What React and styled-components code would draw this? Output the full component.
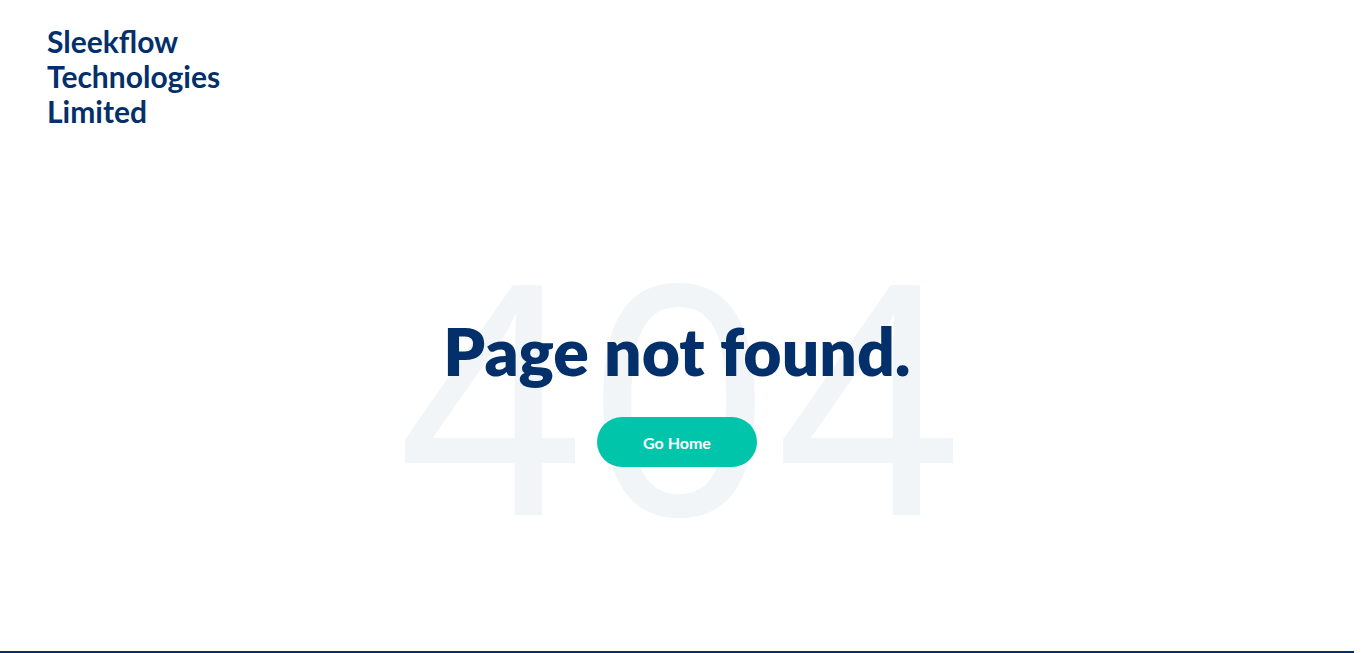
import React from 'react';
import styled, { createGlobalStyle } from 'styled-components';

const GlobalStyle = createGlobalStyle`
    html, body {
        margin: 0;
        padding: 0;
        background: #ffffff;
    }
    body {
        font-family: 'Lato', 'Noto Sans', sans-serif;
        color: #03306b;
    }
`;

const Page = styled.div`
    height: 100vh;
    box-sizing: border-box;
    margin-right: 12px;
    display: flex;
    flex-direction: column;
    border-bottom: 2px solid #03306b;
    overflow: hidden;
`;

const Header = styled.header`
    padding: 24px 47px 0;
`;

const Logo = styled.div`
    width: 220px;
    font-size: 30px;
    font-weight: 700;
    line-height: 35px;
    color: #03306b;
`;

const Stage = styled.main`
    flex: 1;
    display: grid;
    place-items: center;
    padding-bottom: 34px;
`;

const BigCode = styled.div`
    grid-area: 1 / 1;
    font-family: 'Noto Sans', 'Lato', sans-serif;
    font-size: 320px;
    font-weight: 400;
    line-height: 1;
    color: #f1f5f8;
    letter-spacing: 6px;
    user-select: none;
    margin-top: 36px;
    margin-left: 10px;
`;

const Content = styled.div`
    grid-area: 1 / 1;
    display: flex;
    flex-direction: column;
    align-items: center;
    gap: 30px;
    z-index: 1;
    margin-top: 36px;
`;

const Title = styled.h1`
    margin: 0;
    font-size: 66px;
    font-weight: 800;
    line-height: 1.1;
    color: #03306b;
`;

const HomeButton = styled.a`
    display: flex;
    align-items: center;
    justify-content: center;
    width: 160px;
    height: 50px;
    border-radius: 25px;
    background: #00c5ab;
    color: #ffffff;
    font-size: 16px;
    font-weight: 700;
    text-decoration: none;
`;

export default function App() {
    return (
        <>
            <GlobalStyle />
            <Page>
                <Header>
                    <Logo>Sleekflow Technologies Limited</Logo>
                </Header>
                <Stage>
                    <BigCode>404</BigCode>
                    <Content>
                        <Title>Page not found.</Title>
                        <HomeButton href="#">Go Home</HomeButton>
                    </Content>
                </Stage>
            </Page>
        </>
    );
}
